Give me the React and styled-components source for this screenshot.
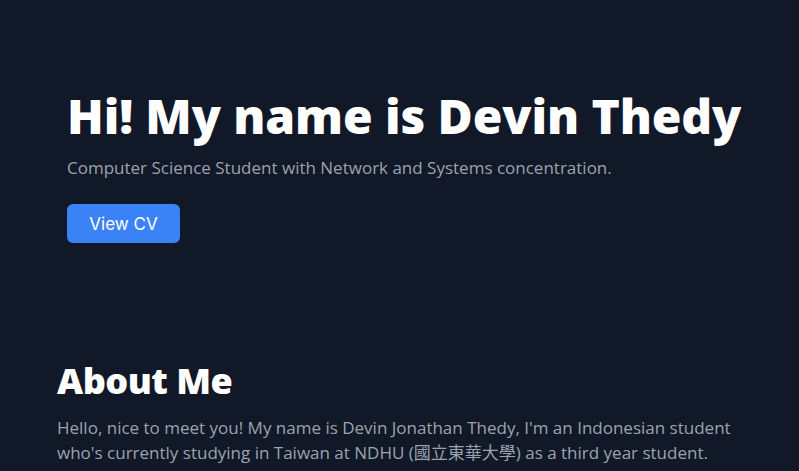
import React from "react";
import styled, { createGlobalStyle } from "styled-components";

const GlobalStyle = createGlobalStyle`
  html, body {
    margin: 0;
    padding: 0;
    background-color: #111827;
  }
  body {
    font-family: "Open Sans", "Noto Sans CJK TC", sans-serif;
  }
`;

const Page = styled.main`
  min-height: 471px;
  background-color: #111827;
  display: flex;
  flex-direction: column;
`;

const Hero = styled.section`
  padding: 84px 67px 0;
  display: flex;
  flex-direction: column;
  align-items: flex-start;
`;

const Title = styled.h1`
  margin: 0;
  color: #fff;
  font-family: "Open Sans", sans-serif;
  font-weight: 800;
  font-size: 48px;
  line-height: 64px;
  letter-spacing: -0.1px;
  white-space: nowrap;
`;

const Subtitle = styled.p`
  margin: 6px 0 0;
  color: #9ca3af;
  font-size: 17px;
  line-height: 28px;
`;

const CvButton = styled.button`
  margin-top: 22px;
  width: 113px;
  height: 39px;
  border: 0;
  border-radius: 6px;
  background-color: #3b82f6;
  color: #fff;
  font-family: Inter, sans-serif;
  font-size: 17px;
  cursor: pointer;
`;

const About = styled.section`
  padding: 114px 57px 0;
  max-width: 690px;
`;

const SectionTitle = styled.h2`
  margin: 0;
  color: #fff;
  font-family: "Open Sans", sans-serif;
  font-weight: 800;
  font-size: 36px;
  line-height: 48px;
  letter-spacing: -0.5px;
`;

const Paragraph = styled.p`
  margin: 10px 0 0;
  color: #9ca3af;
  font-size: 17px;
  line-height: 25px;
`;

export default function App() {
  return (
    <>
      <GlobalStyle />
      <Page>
        <Hero>
          <Title>Hi! My name is Devin Thedy</Title>
          <Subtitle>Computer Science Student with Network and Systems concentration.</Subtitle>
          <CvButton>View CV</CvButton>
        </Hero>
        <About>
          <SectionTitle>About Me</SectionTitle>
          <Paragraph>
            Hello, nice to meet you! My name is Devin Jonathan Thedy, I'm an Indonesian student
            who's currently studying in Taiwan at NDHU (國立東華大學) as a third year student.
            <br />
            I have an interest in networking, backend development, Linux systems and open source
            software, and I enjoy learning how things work behind the scenes.
          </Paragraph>
        </About>
      </Page>
    </>
  );
}
